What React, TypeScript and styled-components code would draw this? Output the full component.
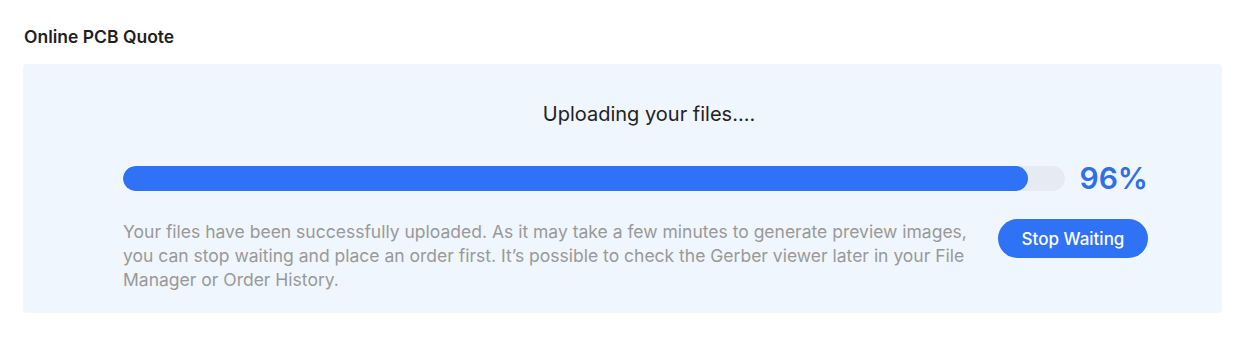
import React from "react";
import styled, { createGlobalStyle } from "styled-components";

const Global = createGlobalStyle`
  body {
    margin: 0;
    background: #ffffff;
    font-family: Inter, "Noto Sans", sans-serif;
    color: #222222;
  }
`;

const Page = styled.div`
  padding: 26px 22px 28px 23px;
`;

const Title = styled.h2`
  margin: 0 0 16px 1px;
  font-size: 17.5px;
  line-height: 22px;
  font-weight: 600;
  color: #1f1f1f;
`;

const Panel = styled.section`
  background: #f0f6fd;
  border-radius: 4px;
  padding: 38px 74px 21px 100px;
`;

const Status = styled.div`
  text-align: center;
  padding-left: 27px;
  font-size: 20px;
  line-height: 24px;
  color: #222222;
  margin-bottom: 40px;
`;

const BarRow = styled.div`
  display: flex;
  align-items: center;
  gap: 14px;
  margin-bottom: 29px;
`;

const Track = styled.div`
  width: 943px;
  height: 25px;
  border-radius: 13px;
  background: #e6ebf3;
  overflow: hidden;
`;

const Fill = styled.div`
  height: 100%;
  border-radius: 13px;
  background: #2f72f5;
`;

const Percent = styled.span`
  font-size: 30px;
  line-height: 25px;
  font-weight: 600;
  color: #2f6fe8;
`;

const InfoRow = styled.div`
  display: flex;
  align-items: flex-start;
  justify-content: space-between;
`;

const Info = styled.p`
  margin: 0;
  width: 860px;
  font-size: 17.5px;
  line-height: 24px;
  color: #999999;
`;

const Button = styled.button`
  margin-top: -1px;
  width: 150px;
  height: 39px;
  border: none;
  border-radius: 20px;
  background: #2f72f5;
  color: #ffffff;
  font-family: Inter, "Noto Sans", sans-serif;
  font-size: 17px;
  font-weight: 500;
  cursor: pointer;
`;

export default function App(): JSX.Element {
  const progress = 96;
  return (
    <>
      <Global />
      <Page>
        <Title>Online PCB Quote</Title>
        <Panel>
          <Status>Uploading your files....</Status>
          <BarRow>
            <Track>
              <Fill style={{ width: `${progress}%` }} />
            </Track>
            <Percent>{progress}%</Percent>
          </BarRow>
          <InfoRow>
            <Info>
              Your files have been successfully uploaded. As it may take a few
              minutes to generate preview images, you can stop waiting and place
              an order first. It’s possible to check the Gerber viewer later in
              your File Manager or Order History.
            </Info>
            <Button>Stop Waiting</Button>
          </InfoRow>
        </Panel>
      </Page>
    </>
  );
}
